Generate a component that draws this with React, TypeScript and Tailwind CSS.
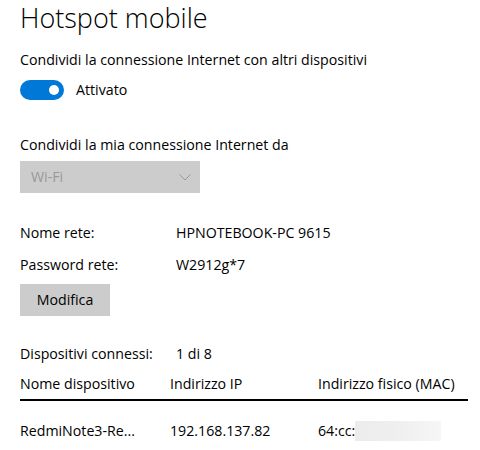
import React from 'react';

const font = { fontFamily: '"Segoe UI", "Open Sans", "Noto Sans", sans-serif' };

function Toggle() {
  return (
    <div className="w-[44px] h-[20px] rounded-full bg-[#0078d7] flex items-center justify-end pr-[5px]">
      <div className="w-[10px] h-[10px] rounded-full bg-white" />
    </div>
  );
}

export default function App() {
  return (
    <div className="w-[480px] h-[450px] bg-white text-black overflow-hidden px-[20px] pt-[2px]" style={font}>
      <h1 className="text-[27px] font-light leading-[32px] text-[#000]">Hotspot mobile</h1>

      <p className="text-[14.2px] leading-[20px] mt-[16px]">Condividi la connessione Internet con altri dispositivi</p>
      <div className="flex items-center gap-[12px] mt-[10px]">
        <Toggle />
        <span className="text-[14.2px] leading-[20px]">Attivato</span>
      </div>

      <p className="text-[14.2px] leading-[20px] mt-[35px]">Condividi la mia connessione Internet da</p>
      <div className="mt-[6px] w-[180px] h-[32px] bg-[#cccccc] flex items-center justify-between pl-[11px] pr-[9px]">
        <span className="text-[14.2px] text-[#999999]">Wi-Fi</span>
        <svg width="12" height="7" viewBox="0 0 12 7" fill="none">
          <path d="M0.5 0.5 L6 6 L11.5 0.5" stroke="#999999" strokeWidth="1" />
        </svg>
      </div>

      <div className="grid grid-cols-[156px_1fr] gap-y-[12px] text-[14.2px] leading-[20px] mt-[30px]">
        <span>Nome rete:</span>
        <span>HPNOTEBOOK-PC 9615</span>
        <span>Password rete:</span>
        <span>W2912g*7</span>
      </div>
      <button className="mt-[9px] w-[90px] h-[32px] bg-[#cccccc] text-[14.2px] text-black flex items-center justify-center">
        Modifica
      </button>

      <div className="grid grid-cols-[156px_1fr] text-[14.2px] leading-[20px] mt-[28px]">
        <span>Dispositivi connessi:</span>
        <span>1 di 8</span>
      </div>

      <div className="w-[448px] mt-[10px] text-[14.2px] leading-[20px]">
        <div className="grid grid-cols-[150px_148px_1fr] pb-[5px] border-b-2 border-black">
          <span>Nome dispositivo</span>
          <span>Indirizzo IP</span>
          <span>Indirizzo fisico (MAC)</span>
        </div>
        <div className="grid grid-cols-[150px_148px_1fr] pt-[20px] items-center">
          <span>RedmiNote3-Re...</span>
          <span>192.168.137.82</span>
          <div className="flex items-center">
            <span>64:cc:</span>
            <div className="w-[86px] h-[20px] bg-gradient-to-r from-[#ececec] via-[#efefef] to-[#f6f6f6]" />
          </div>
        </div>
      </div>
    </div>
  );
}
